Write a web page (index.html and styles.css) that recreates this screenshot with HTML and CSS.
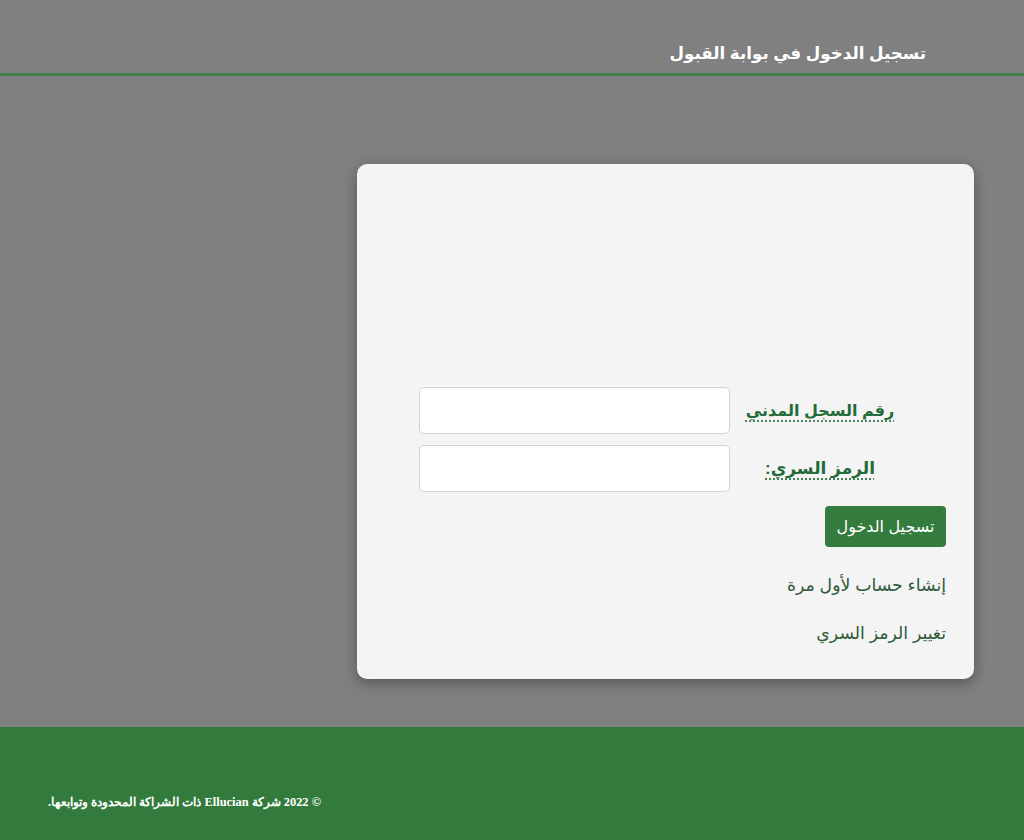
FILE: index.html
```html
<!DOCTYPE html>
<html lang="ar" dir="rtl">
<head>
<meta charset="utf-8">
<title>تسجيل الدخول في بوابة القبول</title>
<link rel="stylesheet" href="styles.css">
</head>
<body>
<header class="top">
  <h1 class="title">تسجيل الدخول في بوابة القبول</h1>
</header>
<main class="main">
  <div class="card">
    <form class="form">
      <div class="row">
        <label class="lbl lbl-long"><abbr title="">رقم السجل المدني</abbr></label>
        <input class="inp" type="text">
      </div>
      <div class="row">
        <label class="lbl"><abbr title="">الرمز السري:</abbr></label>
        <input class="inp" type="password">
      </div>
      <div class="actions">
        <button class="btn" type="button">تسجيل الدخول</button>
      </div>
      <div class="links">
        <a class="lnk" href="#">إنشاء حساب لأول مرة</a>
        <a class="lnk" href="#">تغيير الرمز السري</a>
      </div>
    </form>
  </div>
</main>
<footer class="foot">
  <p class="copy">© 2022 شركة Ellucian ذات الشراكة المحدودة وتوابعها.</p>
</footer>
</body>
</html>
```
FILE: styles.css
```css
* { box-sizing: border-box; }
html, body { margin: 0; padding: 0; }
body {
  background: #808080;
  font-family: "Liberation Sans", "DejaVu Sans", Arial, sans-serif;
  width: 1024px;
  height: 840px;
  display: flex;
  flex-direction: column;
}
.top {
  height: 76px;
  border-bottom: 3px solid #3e7d4a;
  padding-right: 98px;
  display: flex;
  align-items: flex-start;
}
.title {
  margin: 40px 0 0;
  color: #ffffff;
  font-size: 16.7px;
  font-weight: bold;
  line-height: 28px;
}
.main {
  flex: 1;
  padding: 88px 50px 0 0;
  display: flex;
  justify-content: flex-start;
}
.card {
  width: 617px;
  height: 515px;
  background: #f4f4f4;
  border-radius: 10px;
  box-shadow: 0 4px 14px rgba(0,0,0,0.35);
  padding: 223px 28px 0 0;
}
.form { display: flex; flex-direction: column; }
.row {
  display: flex;
  align-items: center;
  margin-bottom: 11px;
}
.lbl {
  width: 164px;
  margin-right: 44px;
  margin-left: 8px;
  text-align: center;
  color: #236b39;
  font-weight: bold;
  font-size: 17px;
  white-space: nowrap;
}
.lbl-long { font-size: 16px; }
.lbl abbr {
  text-decoration: underline dotted;
  text-underline-offset: 5px;
}
.inp {
  width: 311px;
  height: 47px;
  border: 1px solid #d4d4d4;
  border-radius: 5px;
  background: #fff;
}
.actions { margin-top: 3px; display: flex; }
.btn {
  background: #337c3d;
  color: #fff;
  border: none;
  border-radius: 4px;
  width: 121px;
  height: 41px;
  font-family: inherit;
  font-size: 16px;
  padding: 0;
}
.links {
  display: flex;
  flex-direction: column;
  align-items: flex-start;
  margin-top: 27px;
  gap: 26px;
}
.lnk {
  color: #2f5a3a;
  text-decoration: none;
  font-size: 17.3px;
  line-height: 22px;
}
.foot {
  height: 113px;
  background: #337b3d;
  padding-left: 48px;
  direction: ltr;
  display: flex;
}
.copy {
  direction: rtl;
  margin: 67px 0 0;
  color: #fff;
  font-family: "Liberation Serif", "DejaVu Serif", serif;
  font-weight: bold;
  font-size: 12.4px;
}
```
